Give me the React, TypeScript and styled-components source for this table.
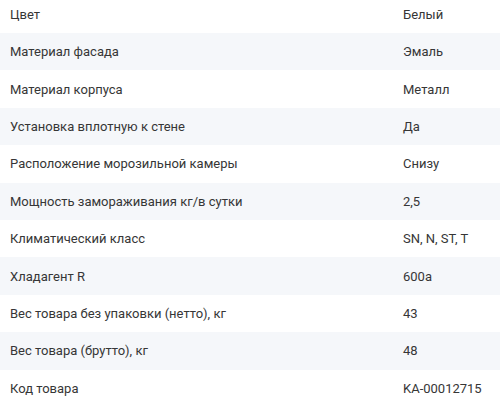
import styled, { createGlobalStyle } from "styled-components";

const GlobalStyle = createGlobalStyle`
  html, body {
    margin: 0;
    padding: 0;
    background: #ffffff;
  }
`;

const specs = [
  ["Цвет", "Белый"],
  ["Материал фасада", "Эмаль"],
  ["Материал корпуса", "Металл"],
  ["Установка вплотную к стене", "Да"],
  ["Расположение морозильной камеры", "Снизу"],
  ["Мощность замораживания кг/в сутки", "2,5"],
  ["Климатический класс", "SN, N, ST, T"],
  ["Хладагент R", "600a"],
  ["Вес товара без упаковки (нетто), кг", "43"],
  ["Вес товара (брутто), кг", "48"],
  ["Код товара", "KA-00012715"],
];

const Table = styled.div`
  display: flex;
  flex-direction: column;
  width: 500px;
  margin-top: -4.4px;
  font-family: Roboto, "Noto Sans", sans-serif;
  font-size: 13px;
  color: #363636;
`;

const Row = styled.div<{ $striped: boolean }>`
  display: grid;
  grid-template-columns: 393px 1fr;
  align-items: center;
  height: 37.4px;
  padding-left: 10px;
  background: ${(p) => (p.$striped ? "#f5f7fa" : "#ffffff")};
`;

const Label = styled.span`
  white-space: nowrap;
`;

const Value = styled.span`
  white-space: nowrap;
`;

export default function App() {
  return (
    <>
      <GlobalStyle />
      <Table>
        {specs.map(([label, value], i) => (
          <Row key={label} $striped={i % 2 === 1}>
            <Label>{label}</Label>
            <Value>{value}</Value>
          </Row>
        ))}
      </Table>
    </>
  );
}
